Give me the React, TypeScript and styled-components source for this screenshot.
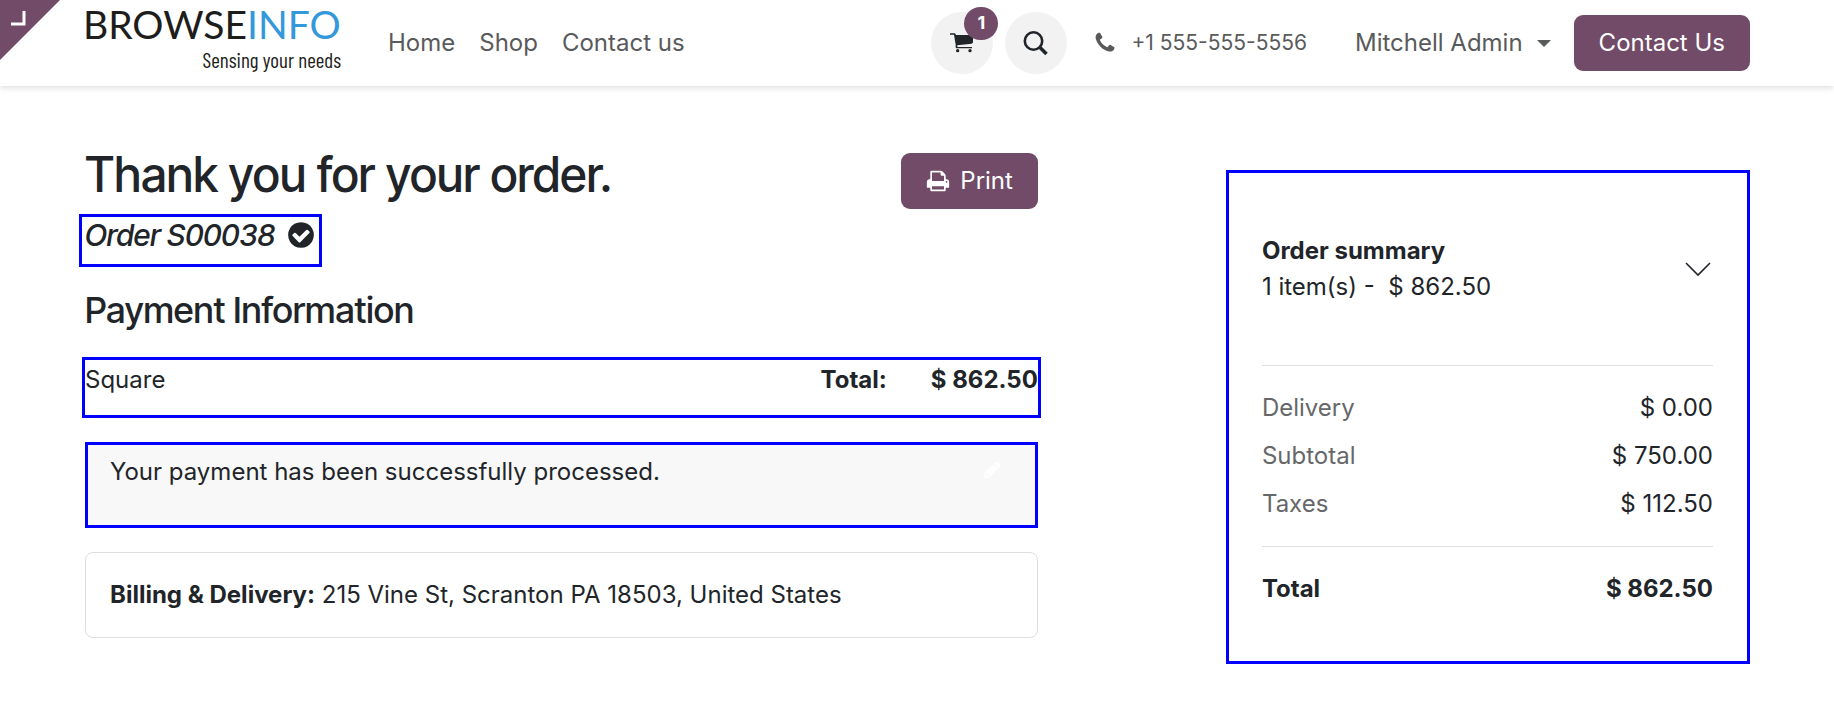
import React from 'react';
import styled, { createGlobalStyle } from 'styled-components';

const plum = '#714b67';
const ink = '#212529';
const annotation = '#0000ff';
const line = '#dcdee0';

const GlobalStyle = createGlobalStyle`
  *, *::before, *::after { box-sizing: border-box; }
  body {
    margin: 0;
    background: #fff;
    color: ${ink};
    font-family: Inter, "Liberation Sans", sans-serif;
    font-size: 24px;
    line-height: 36px;
  }
  h1, h2, p { margin: 0; }
`;

const Header = styled.header`
  position: relative;
  display: flex;
  align-items: center;
  height: 86px;
  padding: 0 84px 0 85px;
  background: #fff;
  box-shadow: 0 2px 6px rgba(0, 0, 0, 0.13);
`;

const CornerToggle = styled.button`
  position: absolute;
  top: 0;
  left: 0;
  width: 60px;
  height: 60px;
  padding: 0;
  border: 0;
  background: none;
  svg { display: block; }
`;

const Logo = styled.a`
  display: flex;
  flex-direction: column;
  width: 256px;
  margin-right: 47px;
  padding-bottom: 2px;
  color: #1d1d1b;
  text-decoration: none;
`;

const LogoName = styled.span`
  margin-left: -2px;
  font-family: Lato, sans-serif;
  font-size: 39px;
  line-height: 36px;
`;

const LogoAccent = styled.span`
  color: #3498db;
`;

const Tagline = styled.span`
  align-self: flex-end;
  font-family: "Barlow Condensed", "Roboto Condensed", Roboto, sans-serif;
  font-size: 21px;
  line-height: 36px;
`;

const Nav = styled.nav`
  display: flex;
  flex: 1;
  gap: 24px;
`;

const TextLink = styled.a`
  color: #595a5b;
  text-decoration: none;
  white-space: nowrap;
`;

const RoundButton = styled.button`
  position: relative;
  display: flex;
  flex: none;
  align-items: center;
  justify-content: center;
  width: 62px;
  height: 62px;
  margin-right: 12px;
  padding: 0;
  border: 0;
  border-radius: 50%;
  background: #f2f2f2;
  color: ${ink};
`;

const Badge = styled.span`
  position: absolute;
  top: -5px;
  right: -5px;
  width: 34px;
  height: 33px;
  border-radius: 17px;
  background: ${plum};
  color: #fff;
  font: 700 18px/32px Inter, sans-serif;
`;

const PhoneLink = styled(TextLink)`
  display: flex;
  align-items: center;
  gap: 14px;
  margin: 0 48px 0 14px;
  font-size: 21px;
`;

const UserMenu = styled.button`
  display: flex;
  align-items: center;
  gap: 14px;
  margin-right: 23px;
  padding: 0;
  border: 0;
  background: none;
  color: #595a5b;
  font: inherit;
  white-space: nowrap;
`;

const Caret = styled.span`
  border: 7px solid transparent;
  border-top-color: currentColor;
  border-bottom: 0;
`;

const PrimaryButton = styled.button`
  display: flex;
  flex: none;
  align-items: center;
  gap: 10px;
  padding: 10px 25px;
  border: 0;
  border-radius: 9px;
  background: ${plum};
  color: #fff;
  font: inherit;
  white-space: nowrap;
`;

const Main = styled.main`
  display: grid;
  grid-template-columns: minmax(0, 20fr) minmax(0, 11fr);
  column-gap: 188px;
  align-items: start;
  padding: 67px 84px 57px 85px;
`;

const TitleRow = styled.div`
  display: flex;
  align-items: flex-start;
  justify-content: space-between;
`;

const Title = styled.h1`
  padding-bottom: 17px;
  font-family: "Inter Tight", "Inter Display", Inter, sans-serif;
  font-size: 48px;
  font-weight: 500;
  line-height: 44px;
`;

const OrderNumber = styled.p`
  display: flex;
  gap: 11px;
  width: fit-content;
  height: 53px;
  margin-left: -6px;
  padding: 0 3px;
  border: 3px solid ${annotation};
  font-family: "Inter Tight", "Inter Display", Inter, sans-serif;
  font-size: 30px;
  font-style: italic;
  font-weight: 500;
  svg { margin-top: 3px; }
`;

const SectionTitle = styled.h2`
  margin: 21px 0 25px;
  font-family: "Inter Tight", "Inter Display", Inter, sans-serif;
  font-size: 36px;
  font-weight: 500;
  line-height: 44px;
`;

const PaymentRow = styled.div`
  display: flex;
  gap: 44px;
  height: 61px;
  margin: 0 -3px;
  padding-top: 2px;
  border: 3px solid ${annotation};
  font-weight: 700;
`;

const Provider = styled.span`
  flex: 1;
  font-weight: 400;
`;

const StatusMessage = styled.div`
  display: flex;
  justify-content: space-between;
  margin: 24px 0;
  padding: 9px 33px 35px 22px;
  border: 3px solid ${annotation};
  background: #f8f8f8;
  svg { margin-top: 6px; color: #fff; }
`;

const AddressCard = styled.div`
  padding: 24px;
  border: 1px solid ${line};
  border-radius: 8px;
`;

const Summary = styled.aside`
  margin-top: 17px;
  padding: 60px 34px 54px 33px;
  border: 3px solid ${annotation};
`;

const SummaryToggle = styled.button`
  display: flex;
  align-items: center;
  justify-content: space-between;
  width: 100%;
  padding: 0 0 60px;
  border: 0;
  border-bottom: 1px solid ${line};
  background: none;
  color: inherit;
  font: inherit;
  text-align: left;
  white-space: pre;
`;

const SummaryTable = styled.table`
  width: 100%;
  border-collapse: collapse;
  margin-top: 18px;
`;

const Label = styled.th<{ $strong?: boolean }>`
  padding: ${p => (p.$strong ? '24px 0 0' : '6px 0')};
  color: ${p => (p.$strong ? ink : '#666769')};
  font-weight: ${p => (p.$strong ? 700 : 400)};
  text-align: left;
`;

const Amount = styled.td<{ $strong?: boolean }>`
  padding: ${p => (p.$strong ? '24px 0 0' : '6px 0')};
  font-weight: ${p => (p.$strong ? 700 : 400)};
  text-align: right;
`;

const Charges = styled.tbody`
  tr:last-child > * { padding-bottom: 24px; }
`;

const TotalGroup = styled.tfoot`
  border-top: 1px solid ${line};
`;

const iconPaths = {
  phone:
    'M1600 1240q0 27-10 70.5t-21 68.5q-21 50-122 106-94 51-186 51-27 0-53-3.5t-57.5-12.5-47-14.5-55.5-20.5-49-18q-98-35-175-83-127-79-264-216t-216-264q-48-77-83-175-3-9-18-49t-20.5-55.5-14.5-47-12.5-57.5-3.5-53q0-92 51-186 56-101 106-122 25-11 68.5-21t70.5-10q14 0 21 3 18 6 53 76 11 19 30 54t35 63.5 31 53.5q3 4 17.5 25t21.5 35.5 7 28.5q0 20-28.5 50t-62 55-62 53-28.5 46q0 9 5 22.5t8.5 20.5 14 24 11.5 19q76 137 174 235t235 174q2 1 19 11.5t24 14 20.5 8.5 22.5 5q18 0 46-28.5t53-62 55-62 50-28.5q14 0 28.5 7t35.5 21.5 25 17.5q25 15 53.5 31t63.5 35 54 30q70 35 76 53 3 7 3 21z',
  print:
    'M448 1536h896v-256h-896v256zm0-640h896v-384h-160q-40 0-68-28t-28-68v-160h-640v640zm1152 64q0-26-19-45t-45-19-45 19-19 45 19 45 45 19 45-19 19-45zm128 0v416q0 13-9.5 22.5t-22.5 9.5h-224v160q0 40-28 68t-68 28h-960q-40 0-68-28t-28-68v-160h-224q-13 0-22.5-9.5t-9.5-22.5v-416q0-79 56.5-135.5t135.5-56.5h64v-544q0-40 28-68t68-28h672q40 0 88 20t76 48l152 152q28 28 48 76t20 88v256h64q79 0 135.5 56.5t56.5 135.5z',
  check:
    'M1412 734q0-28-18-46l-91-90q-19-19-45-19t-45 19l-408 407-226-226q-19-19-45-19t-45 19l-91 90q-18 18-18 46 0 27 18 45l362 362q19 19 45 19 27 0 46-19l543-543q18-18 18-45zm252 162q0 209-103 385.5t-279.5 279.5-385.5 103-385.5-103-279.5-279.5-103-385.5 103-385.5 279.5-279.5 385.5-103 385.5 103 279.5 279.5 103 385.5z',
  pencil:
    'M491 1536l91-91-235-235-91 91v107h128v128h107zm523-928q0-22-22-22-10 0-17 7l-542 542q-7 7-7 17 0 22 22 22 10 0 17-7l542-542q7-7 7-17zm-54-192l416 416-832 832h-416v-416zm683 96q0 53-37 90l-166 166-416-416 166-165q36-38 90-38 53 0 91 38l235 234q37 39 37 91z',
};

function Icon({ name, size }: { name: keyof typeof iconPaths; size: number }) {
  return (
    <svg width={size} height={size} viewBox="0 0 1792 1792" fill="currentColor" aria-hidden="true">
      <path d={iconPaths[name]} />
    </svg>
  );
}

const charges = [
  ['Delivery', '$ 0.00'],
  ['Subtotal', '$ 750.00'],
  ['Taxes', '$ 112.50'],
];

export default function App() {
  return (
    <>
      <GlobalStyle />
      <Header>
        <CornerToggle aria-label="Open backend">
          <svg width="60" height="60" viewBox="0 0 60 60">
            <path d="M0 0H60L0 60Z" fill={plum} />
            <path d="M24 11V24H11" fill="none" stroke="#fff" strokeWidth="3" />
          </svg>
        </CornerToggle>
        <Logo href="#">
          <LogoName>BROWSE<LogoAccent>INFO</LogoAccent></LogoName>
          <Tagline>Sensing your needs</Tagline>
        </Logo>
        <Nav>
          <TextLink href="#">Home</TextLink>
          <TextLink href="#">Shop</TextLink>
          <TextLink href="#">Contact us</TextLink>
        </Nav>
        <RoundButton aria-label="Cart">
          <svg width="24" height="20" viewBox="0 0 72 60" fill={ink}>
            <path d="M0 1H13Q16 1 17 4L18 6H69V27Q69 31 65 32L22 37V42H66V46H20Q17 46 17 42V35L12 5H0Z" />
            <circle cx="23" cy="53" r="5" />
            <circle cx="60" cy="53" r="5" />
          </svg>
          <Badge>1</Badge>
        </RoundButton>
        <RoundButton aria-label="Search">
          <svg width="26" height="26" viewBox="0 0 26 26" fill="none" stroke={ink} strokeWidth="2.6">
            <circle cx="10.5" cy="11" r="8.7" />
            <path d="M16.5 17L23.5 24" strokeWidth="3.6" />
          </svg>
        </RoundButton>
        <PhoneLink href="tel:+15555555556">
          <Icon name="phone" size={24} />
          <span>+1 555-555-5556</span>
        </PhoneLink>
        <UserMenu>Mitchell Admin<Caret /></UserMenu>
        <PrimaryButton>Contact Us</PrimaryButton>
      </Header>
      <Main>
        <section>
          <TitleRow>
            <Title>Thank you for your order.</Title>
            <PrimaryButton><Icon name="print" size={24} />Print</PrimaryButton>
          </TitleRow>
          <OrderNumber>Order S00038 <Icon name="check" size={30} /></OrderNumber>
          <SectionTitle>Payment Information</SectionTitle>
          <PaymentRow>
            <Provider>Square</Provider>
            <span>Total:</span>
            <span>$ 862.50</span>
          </PaymentRow>
          <StatusMessage>
            <span>Your payment has been successfully processed.</span>
            <Icon name="pencil" size={19} />
          </StatusMessage>
          <AddressCard><b>Billing &amp; Delivery:</b> 215 Vine St, Scranton PA 18503, United States</AddressCard>
        </section>
        <Summary>
          <SummaryToggle>
            <span><b>Order summary</b>{'\n'}1 item(s) -  $ 862.50</span>
            <svg width="28" height="16" viewBox="0 0 28 16" fill="none" stroke={ink} strokeWidth="1.6">
              <path d="M1 2L13 14L25 2" />
            </svg>
          </SummaryToggle>
          <SummaryTable>
            <Charges>
              {charges.map(([label, amount]) => (
                <tr key={label}><Label scope="row">{label}</Label><Amount>{amount}</Amount></tr>
              ))}
            </Charges>
            <TotalGroup>
              <tr><Label scope="row" $strong>Total</Label><Amount $strong>$ 862.50</Amount></tr>
            </TotalGroup>
          </SummaryTable>
        </Summary>
      </Main>
    </>
  );
}
